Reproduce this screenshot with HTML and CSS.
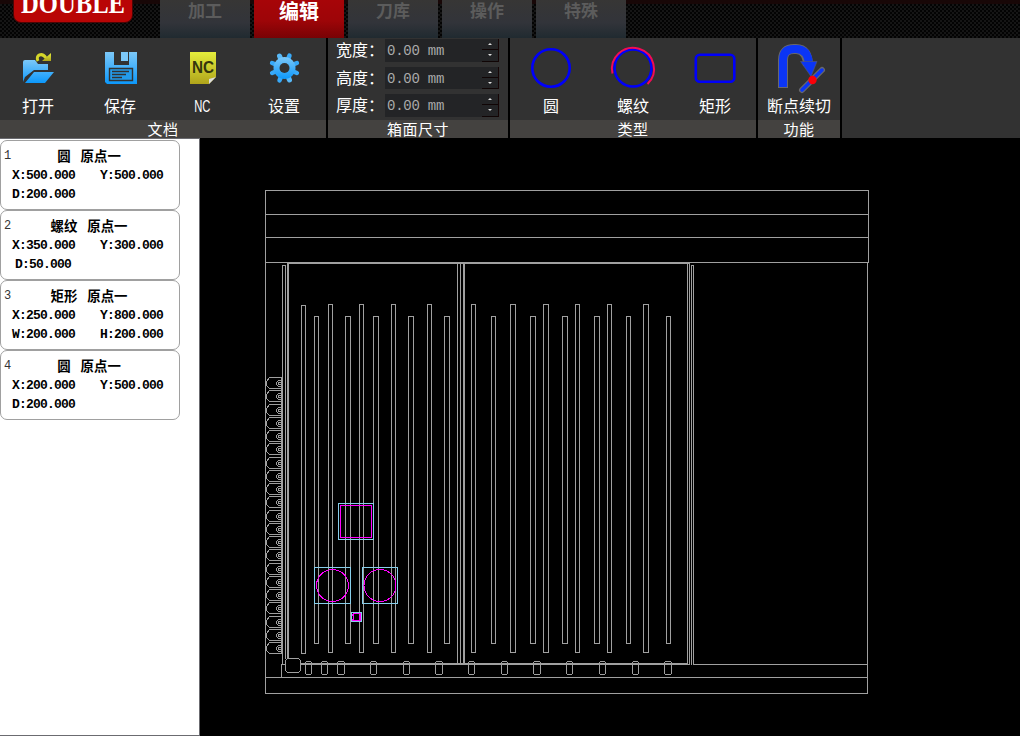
FILE: index.html
```html
<!DOCTYPE html>
<html lang="zh-CN">
<head>
<meta charset="utf-8">
<title>DOUBLE</title>
<link rel="stylesheet" href="styles.css">
</head>
<body>
<header class="topbar">
  <svg class="logo" width="160" height="38"><rect x="13" y="-10" width="120" height="33" rx="8" fill="#4a0505"/><rect x="14" y="-10" width="118" height="32" rx="7" fill="#b90505"/><text x="21" y="13" textLength="104" lengthAdjust="spacingAndGlyphs">DOUBLE</text></svg>
  <nav class="tabs">
    <div class="tab">加工</div><div class="tab active">编辑</div><div class="tab">刀库</div><div class="tab">操作</div><div class="tab">特殊</div>
  </nav>
</header>
<section class="ribbon">
  <div class="group docs">
    <div class="tools">
      <div class="tool"><svg viewBox="0 0 50 52"><defs><linearGradient id="b" x1="0" y1="0" x2="0" y2="1"><stop stop-color="#7cc8f8"/><stop offset="1" stop-color="#0c98fb"/></linearGradient><linearGradient id="y" x1="0" y1="0" x2="0" y2="1"><stop stop-color="#e4ee3c"/><stop offset="1" stop-color="#b0a41b"/></linearGradient></defs><path fill="url(#b)" d="M10 42V22q0-2 2-2h10l3 4h10v6H21l-9 7zM12 43l9-11h20l-9 11z"/><path fill="none" stroke="#d5d62a" stroke-width="3" d="M25 21c-3-6 4-9 8-3"/><path fill="url(#y)" d="M38 13v8h-9z"/></svg><span>打开</span></div>
      <div class="tool"><svg viewBox="0 0 50 52"><path fill="url(#b)" d="M10 12h9v13h15V12h8v32H12l-2-2z"/><path fill="#7cc8f8" d="M26 12h7v9h-7z"/><path fill="#239cec" stroke="#323232" stroke-width="1.4" d="M14.5 28.500h23v12h-23z"/><path stroke="#323232" stroke-width="1.300" d="M17 31.500h17M17 34.500h14M17 37.500h10"/></svg><span>保存</span></div>
      <div class="tool"><svg viewBox="0 0 50 52"><path fill="url(#y)" d="M13 12h26v25l-7 7H13z"/><path fill="#ddd" d="M32 44v-5l7-2z"/><text class="nc" x="15" y="33" textLength="22" lengthAdjust="spacingAndGlyphs">NC</text></svg><span class="latin">NC</span></div>
      <div class="tool"><svg viewBox="0 0 50 52"><g transform="translate(25.5 28)"><path stroke="#58b9f8" stroke-width="5" stroke-linecap="round" d="M-5-12L5 12"/><path stroke="#38a9f8" stroke-width="4.500" stroke-linecap="round" d="M-5 12.400L5-12.400M-12.400-5L12.400 5M-12.400 5L12.400-5"/><circle r="11" fill="url(#b)"/><circle r="5" fill="#323232"/></g></svg><span>设置</span></div>
    </div>
    <div class="caption">文档</div>
  </div>
  <div class="group size">
    <div class="fields">
      <div class="field"><span>宽度：</span><div class="input">0.00 mm<i class="spin"><b></b><b></b></i></div></div>
      <div class="field"><span>高度：</span><div class="input">0.00 mm<i class="spin"><b></b><b></b></i></div></div>
      <div class="field"><span>厚度：</span><div class="input">0.00 mm<i class="spin"><b></b><b></b></i></div></div>
    </div>
    <div class="caption">箱面尺寸</div>
  </div>
  <div class="group types">
    <div class="tools">
      <div class="tool"><svg viewBox="0 0 50 52"><circle cx="25" cy="28" r="18.7" class="blue"/></svg><span>圆</span></div>
      <div class="tool"><svg viewBox="0 0 50 52"><circle cx="25" cy="28" r="18.5" class="blue"/><path d="M4.500 33.500A21 21 0 1 1 39.500 44" fill="none" stroke="#f20c55" stroke-width="2"/></svg><span>螺纹</span></div>
      <div class="tool"><svg viewBox="0 0 50 52"><rect x="5.8" y="14.8" width="38.5" height="27" rx="4" class="blue"/></svg><span>矩形</span></div>
    </div>
    <div class="caption">类型</div>
  </div>
  <div class="group action">
    <div class="tools">
      <div class="tool"><svg viewBox="0 0 50 52"><g fill="none" stroke="#68686c"><path stroke-width="10" d="M9 48V20Q9 9 20 9h2q12 0 12 17"/><path stroke-width="6" stroke-linecap="round" d="M28 50l20-20"/></g><path fill="none" stroke="#0b35f5" stroke-width="8" d="M9 47V20Q9 9 20 9h2q12 0 13 15"/><path fill="#0b35f5" stroke="#555a70" stroke-width=".6" d="M26.500 21.500h16.500l-6 15z"/><path stroke="#0b35f5" stroke-width="3.500" stroke-linecap="round" d="M28 50l20-20"/><circle cx="38.500" cy="40" r="4.200" fill="#fb0008"/></svg><span>断点续切</span></div>
    </div>
    <div class="caption">功能</div>
  </div>
</section>
<main class="workspace">
  <aside class="sidebar">
    <article class="card"><small>1</small><h2><span>圆</span><span>原点一</span></h2><div class="row"><span>X:500.000</span><span>Y:500.000</span></div><div class="row"><span>D:200.000</span></div></article>
    <article class="card"><small>2</small><h2><span>螺纹</span><span>原点一</span></h2><div class="row"><span>X:350.000</span><span>Y:300.000</span></div><div class="row short"><span>D:50.000</span></div></article>
    <article class="card"><small>3</small><h2><span>矩形</span><span>原点一</span></h2><div class="row"><span>X:250.000</span><span>Y:800.000</span></div><div class="row"><span>W:200.000</span><span>H:200.000</span></div></article>
    <article class="card"><small>4</small><h2><span>圆</span><span>原点一</span></h2><div class="row"><span>X:200.000</span><span>Y:500.000</span></div><div class="row"><span>D:200.000</span></div></article>
  </aside>
  <svg class="drawing" viewBox="200 138 820 598" width="820" height="598">
    <g transform="translate(.5 .5)" fill="none" stroke="#a0a0a0" shape-rendering="crispEdges">
      <path d="M265 190H868V262H265zM265 214H868M265 237H868M265 262V693H867V262M265 677H867M287 263H688M287 262V658M288 262V658M281 377V653M282 664V265H285V658M281 677V664H285M300 663H687M300 664H688M457 263V663M460 263V663M463 263V663M464 263V663M687 263V664M689 262V664M691 664V265H693V664H867"/>
      <path d="M287 658H298L300 660V670L298 672H287L285 670V660z"/>
      <g id="slots"></g><g id="bolts"></g><g id="rollers"></g>
      <g stroke="#87ceeb"><path d="M338 503H373V539H338zM314 567H350V603H314zM362 567H397V603H362zM351 612H361V621H351z"/></g>
      <g stroke="#f0f"><path d="M340 505H371V537H340z"/><circle cx="332" cy="585" r="16"/><circle cx="379.500" cy="585" r="16"/><path d="M353 613H360V620H353zM352 613V615M352 618V620M359 614V619"/></g>
    </g>
  </svg>
</main>
<script src="drawing.js"></script>
</body>
</html>
```
FILE: styles.css
```css
* { box-sizing: border-box; }
body { margin: 0; width: 1020px; height: 736px; overflow: hidden; background: #000; font-family: "Liberation Sans", "Noto Sans CJK SC", sans-serif; }
.topbar { display: flex; height: 38px; background: linear-gradient(#180707 0 4px, transparent 4px), repeating-conic-gradient(#030303 0 25%, #151515 0 50%) 0 0 / 4px 4px; }
.logo text { font: bold 29px "Liberation Serif", serif; fill: #fff; }
.tabs { display: flex; gap: 4px; }
.tab { width: 90px; height: 38px; font-size: 17px; font-weight: 700; line-height: 24px; text-align: center; color: #5c5c5c; background: linear-gradient(#373635, #32343a 60%, #202a30); }
.tab.active { color: #fff; font-size: 20px; background: linear-gradient(#a70508, #9d0508 55%, #780205); }
.ribbon { display: flex; height: 100px; background: #323232; }
.group { display: flex; flex-direction: column; border-right: 2px solid #000; height: 100px; }
.docs { width: 328px; }
.size { width: 182px; }
.types { width: 248px; }
.action { width: 84px; }
.tools { display: flex; height: 82px; }
.docs .tools { margin-left: -3px; }
.tool { width: 82px; flex: none; display: flex; flex-direction: column; align-items: center; color: #fff; font-size: 16px; line-height: 20px; white-space: nowrap; }
.tool svg { width: 50px; height: 52px; margin-top: 2px; flex: none; overflow: visible; }
.tool span { margin-top: 5px; }
.tool .latin { font-size: 17px; transform: scaleX(.66); }
.nc { font: bold 16px "Liberation Sans", sans-serif; fill: #34350d; }
.blue { fill: none; stroke: #0000fa; stroke-width: 2.6; }
.caption { height: 18px; background: #444240; color: #fff; font-size: 15px; line-height: 19px; text-align: center; letter-spacing: .5px; }
.fields { height: 82px; padding: 1px 9px 0 8px; display: flex; flex-direction: column; gap: 5px; }
.field { display: flex; height: 22.5px; color: #fff; font-size: 16px; line-height: 24px; }
.field > span { width: 49px; white-space: nowrap; }
.input { flex: 1; display: flex; justify-content: space-between; padding-left: 2px; background: #232426; color: #aaa; font: 14px/25px "Liberation Mono", monospace; letter-spacing: -.25px; }
.spin { display: flex; flex-direction: column; width: 17px; border-right: 1px solid #160505; }
.spin b { flex: 1; display: flex; align-items: center; justify-content: center; border-bottom: 1px solid #100505; }
.spin b::before { content: ""; border: 2px solid transparent; border-top: 0; border-bottom-color: #ddd; }
.spin b:last-child::before { border-top: 2px solid #ddd; border-bottom: 0; }
.workspace { display: flex; height: 598px; }
.sidebar { width: 200px; padding-top: 1px; background: #fff; border: solid #6b6b70; border-width: 1px 1px 1px 0; }
.card { position: relative; width: 180px; height: 70px; padding-top: 7px; border: 1px solid #a0a0a0; border-radius: 7px; color: #000; }
.card small { position: absolute; left: 3px; top: 8px; font: 12px/14px "Liberation Mono", monospace; color: #333; }
.card h2 { display: flex; justify-content: center; gap: 10px; margin: 0 0 0 -2px; font-size: 13.4px; line-height: 18px; height: 18px; font-weight: 700; }
.row { display: flex; gap: 24px; height: 19px; padding-left: 11px; font: bold 13px/19px "Liberation Mono", monospace; letter-spacing: -.8px; }
.row span { width: 64px; white-space: nowrap; }
.short { padding-left: 14px; }
.drawing { display: block; flex: none; }
```
FILE: drawing.js
```js
const ns = "http://www.w3.org/2000/svg";
function add(group, tag, attrs) {
  const node = document.createElementNS(ns, tag);
  for (const key in attrs) node.setAttribute(key, attrs[key]);
  document.getElementById(group).appendChild(node);
}
// Each slot: left edge, width, top, bottom.
const slots = [[301,4,305,653],[314,4,316,643],[328,4,304,652],[345,5,316,643],[359,4,304,652],[373,5,316,643],[391,4,304,652],[408,5,316,643],[427,4,304,652],[444,5,316,643],[471,4,304,652],[491,4,316,643],[510,5,304,652],[530,5,316,643],[543,5,304,652],[562,5,316,643],[575,4,304,652],[594,5,316,643],[607,4,304,652],[626,4,316,643],[643,5,304,652],[666,4,316,643]];
for (const [x, width, y, end] of slots) add("slots", "rect", { x, y, width, height: end - y });
const bolts = [[305,6],[321,6],[337,7],[370,6],[403,6],[435,7],[468,6],[501,6],[533,7],[566,6],[599,6],[632,6],[664,7]];
for (const [x, width] of bolts) add("bolts", "rect", { x, y: 661, width, height: 13, rx: 2 });
for (let i = 0; i < 21; i++) {
  const y = Math.round(377 + i * 13.25);
  add("rollers", "path", { d: `M281 ${y}H269L266 ${y + 4}V${y + 8}L269 ${y + 11}H281` });
  add("rollers", "path", { d: `M280 ${y + 3}H278L276 ${y + 5}V${y + 7}L278 ${y + 9}H280M280 ${y + 5}H278V${y + 7}H280` });
}
```
